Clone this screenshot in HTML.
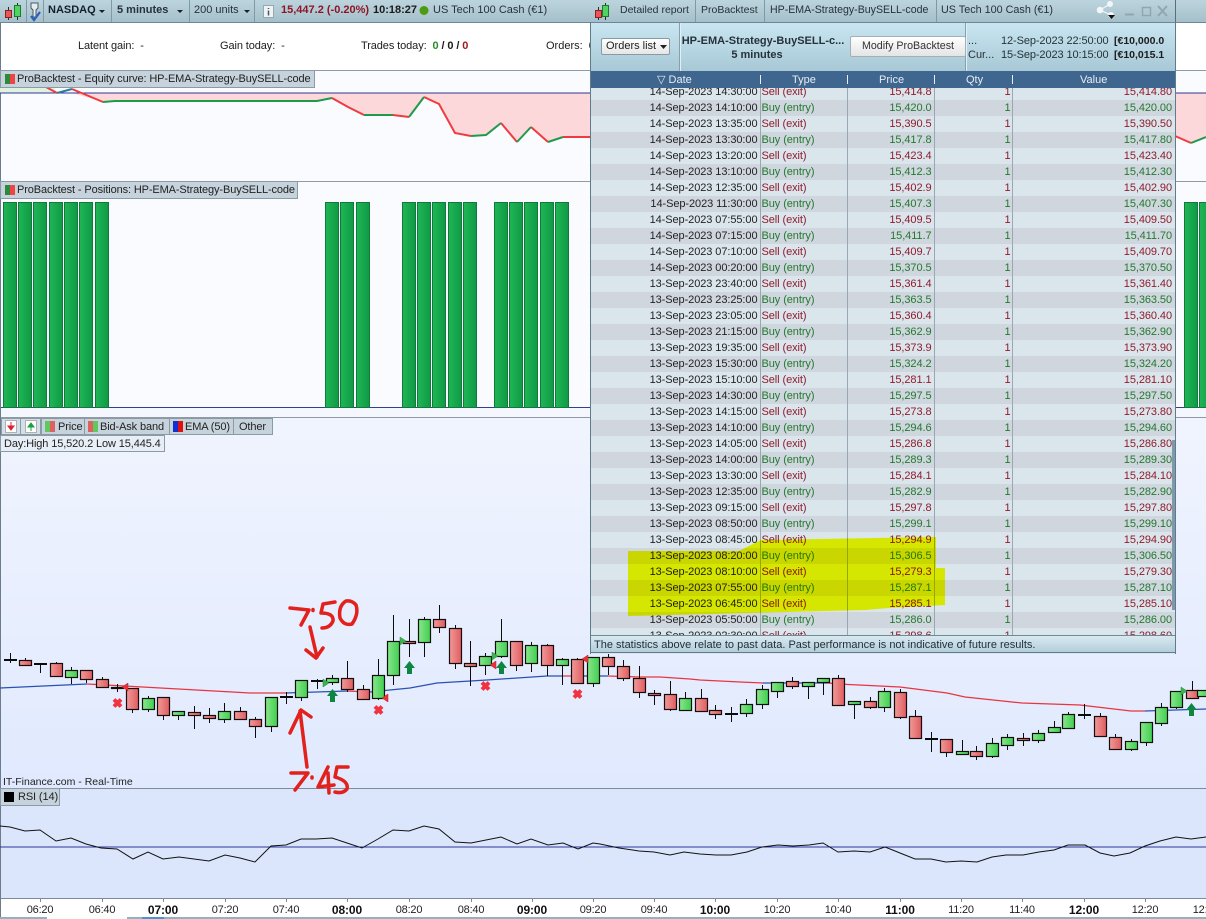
<!DOCTYPE html>
<html><head><meta charset="utf-8"><title>ProBacktest</title>
<style>
html,body{margin:0;padding:0;background:#fff}
#p{position:relative;width:1206px;height:919px;overflow:hidden;font:11px/14px "Liberation Sans",Arial,sans-serif;color:#1c1c1c;background:#fff}
.a{position:absolute;white-space:nowrap}
.lb{position:absolute;background:#c6d3dc;border:1px solid #8b9aa5;box-sizing:border-box;white-space:nowrap;color:#222;line-height:17px;letter-spacing:-.12px}
.sw{position:absolute;width:10px;height:10px;top:3px;left:4px}
.sep{position:absolute;top:0;width:1px;height:22px;background:#7f9aa6}
svg{position:absolute;left:0;top:0}
.g{fill:url(#gg);stroke:#0c120c;stroke-width:1.2}
.r{fill:url(#rg);stroke:#180c0c;stroke-width:1.2}
#tb{position:absolute;left:0;top:88px;width:585px;height:547px;overflow:hidden}
table{border-collapse:collapse;table-layout:fixed;width:585px;margin-top:-4px}
td{height:16px;padding:0;line-height:16px;font-size:11px;border-left:1px solid #98a7b2;box-sizing:border-box;white-space:nowrap;overflow:hidden;letter-spacing:-.08px}
td:first-child{border-left:0;text-align:right;padding-right:2px;color:#222}
td:nth-child(2){padding-left:1px}
td:nth-child(3){text-align:right;padding-right:2px}
td:nth-child(4){text-align:right;padding-right:1px}
td:nth-child(5){text-align:right;padding-right:3px}
.s{background:#dbe6ec;color:#8f1b2c}
.b{background:#cfd6dd;color:#23792f}
.ax{position:absolute;top:903px;font-size:11px;line-height:14px;width:50px;text-align:center;color:#222;letter-spacing:-.2px}
.ax.bd{font-weight:bold;font-size:12px;color:#111;letter-spacing:-.1px}
</style></head><body><div id="p">

<!-- top bar -->
<div class="a" style="left:0;top:0;width:1206px;height:22px;background:linear-gradient(#bcd4dd,#a6c0cb);border-bottom:1px solid #6d8794;box-sizing:content-box"></div>
<div class="sep" style="left:26px"></div><div class="sep" style="left:43px"></div><div class="sep" style="left:111px"></div><div class="sep" style="left:189px"></div><div class="sep" style="left:254px"></div>
<span class="a" style="left:48px;top:3px;font-weight:bold;color:#13202a">NASDAQ</span>
<span class="a" style="left:117px;top:3px;font-weight:bold;color:#26323a">5 minutes</span>
<span class="a" style="left:194px;top:3px;color:#26323a">200 units</span>
<span class="a" style="left:281px;top:3px;font-weight:bold;color:#8e1526">15,447.2 (-0.20%)</span>
<span class="a" style="left:373px;top:3px;font-weight:bold;color:#1b1b1b">10:18:27</span>
<span class="a" style="left:433px;top:3px;color:#26323a">US Tech 100 Cash (€1)</span>

<!-- info row -->
<span class="a" style="left:78px;top:39px;letter-spacing:-.1px">Latent gain: &nbsp;-</span>
<span class="a" style="left:220px;top:39px;letter-spacing:-.1px">Gain today: &nbsp;-</span>
<span class="a" style="left:361px;top:39px;letter-spacing:-.1px">Trades today: &nbsp;<b style="color:#2b8a2b">0</b> <b>/ 0 /</b> <b style="color:#a01a1a">0</b></span>
<span class="a" style="left:546px;top:39px">Orders: &nbsp;0</span>

<!-- chart main backgrounds -->
<div class="a" style="left:0;top:70px;width:1206px;height:1px;background:#8f9aa4"></div>
<div class="a" style="left:0;top:71px;width:1206px;height:110px;background:#fafbff"></div>
<div class="a" style="left:0;top:181px;width:1206px;height:1px;background:#8f9aa4"></div>
<div class="a" style="left:0;top:182px;width:1206px;height:225px;background:#f9fbff"></div>
<div class="a" style="left:0;top:407px;width:1206px;height:1px;background:#34408a"></div>
<div class="a" style="left:0;top:408px;width:1206px;height:9px;background:#f4f7fe"></div>
<div class="a" style="left:0;top:417px;width:1206px;height:1px;background:#8f9aa4"></div>
<div class="a" style="left:0;top:418px;width:1206px;height:370px;background:linear-gradient(#f0f4fe,#e0e9fe)"></div>
<div class="a" style="left:0;top:788px;width:1206px;height:1px;background:#7e8c9a"></div>
<div class="a" style="left:0;top:789px;width:1206px;height:109px;background:#dbe6fd"></div>
<div class="a" style="left:0;top:898px;width:1206px;height:1px;background:#7e8c9a"></div>
<div class="a" style="left:0;top:899px;width:1206px;height:18px;background:#fff"></div>
<div class="a" style="left:0;top:917px;width:1206px;height:2px;background:#93b2bf"></div>
<div class="a" style="left:47px;top:917px;width:80px;height:2px;background:#fff"></div>
<div class="a" style="left:142px;top:917px;width:22px;height:2px;background:#4a93d0"></div>
<div class="a" style="left:0;top:22px;width:1px;height:895px;background:#6c7c8a"></div>

<svg width="1206" height="919" viewBox="0 0 1206 919">
<defs>
<linearGradient id="gg" x1="0" x2="1" y1="0" y2="0"><stop offset="0" stop-color="#8ae58a"/><stop offset="1" stop-color="#3fd051"/></linearGradient>
<linearGradient id="rg" x1="0" x2="1" y1="0" y2="0"><stop offset="0" stop-color="#f09a9a"/><stop offset="1" stop-color="#e05c5f"/></linearGradient>
<linearGradient id="bar" x1="0" x2="1" y1="0" y2="0"><stop offset="0" stop-color="#1fb656"/><stop offset="1" stop-color="#0f9a45"/></linearGradient>
</defs>

<!-- equity -->
<path d="M72 93L103 102L115 101L317 101L332 98L348 107L364 115L393 115L409 117L424 97L439 104L455 133L471 136L486 135L501 123L517 142L531 127L548 142L563 137L590 137L590 93Z" fill="#fdd8da"/>
<path d="M1175 93L1175 136L1191 143L1206 137L1206 93Z" fill="#fdd8da"/>
<path d="M0 71H46L57 93H0Z" fill="#dff2df"/>
<path d="M0 93H1206" stroke="#2e3596" stroke-width="1" fill="none"/>
<g fill="none" stroke-width="2">
<path d="M46 87L57 93M72 89L103 102M332 98L348 107L364 115M393 115L409 117M424 97L439 104L455 133L471 136M501 123L517 142M531 127L548 142M563 137L590 137M1175 136L1191 143" stroke="#ef3b3f"/>
<path d="M57 93L72 89" stroke="#2a7f96"/>
<path d="M103 102L115 101L317 101L332 98M364 115L393 115M409 117L424 97M471 136L486 135L501 123M517 142L531 127M548 142L563 137M1191 143L1206 137" stroke="#1f9a4d"/>
</g>

<!-- position bars -->
<g fill="url(#bar)" stroke="#117a3a" stroke-width="1">
<rect x="3.5" y="202.5" width="13" height="205"/><rect x="18.5" y="202.5" width="13" height="205"/><rect x="33.5" y="202.5" width="13" height="205"/><rect x="49.5" y="202.5" width="13" height="205"/><rect x="64.5" y="202.5" width="13" height="205"/><rect x="79.5" y="202.5" width="13" height="205"/><rect x="95.5" y="202.5" width="13" height="205"/>
<rect x="325.5" y="202.5" width="13" height="205"/><rect x="340.5" y="202.5" width="13" height="205"/><rect x="356.5" y="202.5" width="13" height="205"/>
<rect x="402.5" y="202.5" width="13" height="205"/><rect x="417.5" y="202.5" width="13" height="205"/><rect x="432.5" y="202.5" width="13" height="205"/><rect x="448.5" y="202.5" width="13" height="205"/><rect x="463.5" y="202.5" width="13" height="205"/>
<rect x="494.5" y="202.5" width="13" height="205"/><rect x="509.5" y="202.5" width="13" height="205"/><rect x="524.5" y="202.5" width="13" height="205"/><rect x="540.5" y="202.5" width="13" height="205"/><rect x="555.5" y="202.5" width="13" height="205"/>
<rect x="1184.5" y="202.5" width="13" height="205"/><rect x="1199.5" y="202.5" width="13" height="205"/>
</g>

<!-- EMA -->
<g fill="none" stroke-width="1.3">
<path d="M0 688L87 684M286 693L347 691M370 692L410 688L437 683L487 680L547 676L562 676M578 676L608 676M763 683L828 683M1145 711L1206 709" stroke="#2a50b4"/>
<path d="M87 684L125 686L250 693L286 693M347 691L370 692M562 676L578 676M608 676L640 677L660 677L690 679L700 680L740 682L763 683M828 683L838 684L900 687L947 693L965 697L1012 702L1022 703L1080 705L1131 711L1145 711" stroke="#e8353f"/>
</g>

<!-- wicks -->
<path stroke="#0c0c0c" stroke-width="1" fill="none" d="M10.5 653V663M25.5 658V666M40.5 664V673M56.5 662V677M71.5 667V684M86.5 670V683M102.5 677V687M117.5 684V692M132.5 688V713M148.5 696V712M163.5 697V720M178.5 711V720M194.5 706V729M209.5 708V723M224.5 703V723M240.5 707V719M255.5 717V738M271.5 697V732M286.5 692V704M301.5 680V701M317.5 679V689M332.5 675V685M347.5 661V692M363.5 685V699M378.5 659V700M393.5 615V685M409.5 619V657M424.5 617V657M439.5 605V633M455.5 625V669M470.5 641V686M485.5 653V675M501.5 619V658M516.5 641V671M531.5 642V672M547.5 644V676M562.5 658V685M577.5 658V683M593.5 657V687M608.5 654V675M623.5 660V681M639.5 666V698M654.5 690V705M670.5 681V711M685.5 692V711M701.5 689V712M715.5 705V719M731.5 707V722M746.5 699V717M762.5 685V709M777.5 682V698M792.5 677V689M808.5 682V699M823.5 678V695M838.5 675V705M854.5 701V719M870.5 697V709M884.5 688V712M900.5 689V719M915.5 710V739M931.5 732V752M946.5 739V757M962.5 740V755M976.5 746V760M992.5 738V758M1007.5 734V750M1023.5 733V746M1038.5 730V743M1054.5 721V733M1068.5 712V729M1084.5 704V719M1100.5 713V736M1115.5 734V750M1131.5 739V751M1146.5 722V746M1161.5 703V726M1176.5 691V709M1192.5 681V699"/>
<!-- dojis -->
<path stroke="#0c0c0c" stroke-width="2" fill="none" d="M4 660H17M34 664H47M280 697H293M311 681H324M725 714H738M925 739H938M1078 715H1091"/>

<!-- red bodies -->
<rect class="r" x="19.5" y="660.5" width="12" height="5"/><rect class="r" x="50.5" y="663.5" width="12" height="13"/><rect class="r" x="80.5" y="670.5" width="12" height="9"/><rect class="r" x="96.5" y="679.5" width="12" height="8"/><rect class="r" x="111.5" y="687.5" width="12" height="1"/><rect class="r" x="126.5" y="688.5" width="12" height="21"/><rect class="r" x="157.5" y="697.5" width="12" height="18"/><rect class="r" x="188.5" y="712.5" width="12" height="3"/><rect class="r" x="203.5" y="715.5" width="12" height="3"/><rect class="r" x="234.5" y="711.5" width="12" height="8"/><rect class="r" x="249.5" y="719.5" width="12" height="7"/><rect class="r" x="341.5" y="678.5" width="12" height="11"/><rect class="r" x="357.5" y="689.5" width="12" height="10"/><rect class="r" x="403.5" y="641.5" width="12" height="2"/><rect class="r" x="433.5" y="619.5" width="12" height="8"/><rect class="r" x="449.5" y="628.5" width="12" height="35"/><rect class="r" x="464.5" y="663.5" width="12" height="3"/><rect class="r" x="510.5" y="641.5" width="12" height="24"/><rect class="r" x="541.5" y="645.5" width="12" height="20"/><rect class="r" x="571.5" y="659.5" width="12" height="24"/><rect class="r" x="602.5" y="657.5" width="12" height="9"/><rect class="r" x="617.5" y="666.5" width="12" height="12"/><rect class="r" x="633.5" y="678.5" width="12" height="14"/><rect class="r" x="648.5" y="693.5" width="12" height="2"/><rect class="r" x="664.5" y="694.5" width="12" height="15"/><rect class="r" x="695.5" y="698.5" width="12" height="13"/><rect class="r" x="709.5" y="710.5" width="12" height="4"/><rect class="r" x="786.5" y="681.5" width="12" height="5"/><rect class="r" x="832.5" y="678.5" width="12" height="27"/><rect class="r" x="864.5" y="701.5" width="12" height="6"/><rect class="r" x="894.5" y="692.5" width="12" height="25"/><rect class="r" x="909.5" y="716.5" width="12" height="22"/><rect class="r" x="940.5" y="739.5" width="12" height="13"/><rect class="r" x="970.5" y="751.5" width="12" height="5"/><rect class="r" x="1017.5" y="738.5" width="12" height="2"/><rect class="r" x="1094.5" y="716.5" width="12" height="20"/><rect class="r" x="1109.5" y="737.5" width="12" height="12"/><rect class="r" x="1186.5" y="690.5" width="12" height="8"/>
<!-- green bodies -->
<rect class="g" x="65.5" y="670.5" width="12" height="7"/><rect class="g" x="142.5" y="698.5" width="12" height="11"/><rect class="g" x="172.5" y="711.5" width="12" height="4"/><rect class="g" x="218.5" y="711.5" width="12" height="8"/><rect class="g" x="265.5" y="697.5" width="12" height="29"/><rect class="g" x="295.5" y="680.5" width="12" height="17"/><rect class="g" x="326.5" y="678.5" width="12" height="4"/><rect class="g" x="372.5" y="675.5" width="12" height="23"/><rect class="g" x="387.5" y="641.5" width="12" height="34"/><rect class="g" x="418.5" y="619.5" width="12" height="23"/><rect class="g" x="479.5" y="656.5" width="12" height="9"/><rect class="g" x="495.5" y="641.5" width="12" height="15"/><rect class="g" x="525.5" y="645.5" width="12" height="18"/><rect class="g" x="556.5" y="659.5" width="12" height="6"/><rect class="g" x="587.5" y="657.5" width="12" height="26"/><rect class="g" x="679.5" y="698.5" width="12" height="12"/><rect class="g" x="740.5" y="704.5" width="12" height="9"/><rect class="g" x="756.5" y="689.5" width="12" height="15"/><rect class="g" x="771.5" y="682.5" width="12" height="9"/><rect class="g" x="802.5" y="682.5" width="12" height="4"/><rect class="g" x="817.5" y="678.5" width="12" height="4"/><rect class="g" x="848.5" y="701.5" width="12" height="3"/><rect class="g" x="878.5" y="691.5" width="12" height="16"/><rect class="g" x="956.5" y="751.5" width="12" height="3"/><rect class="g" x="986.5" y="743.5" width="12" height="13"/><rect class="g" x="1001.5" y="737.5" width="12" height="8"/><rect class="g" x="1032.5" y="733.5" width="12" height="7"/><rect class="g" x="1048.5" y="727.5" width="12" height="5"/><rect class="g" x="1062.5" y="714.5" width="12" height="14"/><rect class="g" x="1125.5" y="741.5" width="12" height="8"/><rect class="g" x="1140.5" y="722.5" width="12" height="20"/><rect class="g" x="1155.5" y="707.5" width="12" height="16"/><rect class="g" x="1170.5" y="691.5" width="12" height="16"/><rect class="g" x="1197.5" y="690.5" width="12" height="6"/>

<!-- markers: X -->
<g stroke="#f0333f" stroke-width="4" fill="none">
<path d="M114 699.5L121 706.5M121 699.5L114 706.5"/>
<path d="M375 706.5L382 713.5M382 706.5L375 713.5"/>
<path d="M482 682.5L489 689.5M489 682.5L482 689.5"/>
<path d="M574 690.5L581 697.5M581 690.5L574 697.5"/>
</g>
<!-- up arrows -->
<g fill="#0c8642">
<path d="M332.5 689L338 696H335V702H330V696H327Z"/>
<path d="M409.5 661L415 668H412V674H407V668H404Z"/>
<path d="M501.5 661L507 668H504V674H499V668H496Z"/>
<path d="M1191.5 703L1197 710H1194V716H1189V710H1186Z"/>
</g>
<!-- triangles -->
<g fill="#e9333b" stroke="#b81e26" stroke-width=".5">
<path d="M128 683V691L122 687Z"/><path d="M388 694V702L382 698Z"/><path d="M496 661V669L490 665Z"/><path d="M588 655V663L582 659Z"/>
</g>
<g fill="#3bb54a" stroke="#1e8a40" stroke-width=".5">
<path d="M323 679V687L329 683Z"/><path d="M400 637V645L406 641Z"/><path d="M492 652V660L498 656Z"/><path d="M1181 687V695L1187 691Z"/>
</g>

<!-- RSI -->
<path d="M0 847H1206" stroke="#2e3596" stroke-width="1" fill="none"/>
<path fill="none" stroke="#111" stroke-width="1" d="M0 826L10 827L25 831L40 830L56 841L71 838L86 844L101 848L117 849L133 859L148 852L163 859L179 857L194 859L209 861L225 855L240 858L255 862L271 846L286 845L301 839L316 839L332 838L347 843L362 848L378 839L393 830L409 831L424 826L439 829L455 842L471 843L486 840L501 837L517 844L531 839L548 845L563 843L578 849L593 843L600 844L619 848L639 851L654 852L670 855L684 852L700 854L716 855L731 855L747 852L762 847L778 845L793 846L809 845L823 843L838 852L854 851L870 852L885 847L900 853L915 859L931 859L946 862L961 861L977 862L992 857L1006 855L1023 855L1039 852L1054 850L1068 845L1085 845L1100 853L1114 856L1130 853L1145 846L1160 841L1176 837L1191 839L1206 837"/>
<!-- axis ticks -->
<path stroke="#7e8c9a" stroke-width="1" d="M40.5 899v3M102.5 899v3M163.5 899v3M225.5 899v3M286.5 899v3M347.5 899v3M409.5 899v3M471.5 899v3M532.5 899v3M593.5 899v3M654.5 899v3M715.5 899v3M777.5 899v3M838.5 899v3M900.5 899v3M961.5 899v3M1022.5 899v3M1084.5 899v3M1145.5 899v3"/>

<!-- top icons left -->
<path d="M8.5 7V20M17.5 3V20" stroke="#2a2a2a"/>
<rect x="5.5" y="10.5" width="6" height="7" fill="#e8555a" stroke="#8a2020"/>
<rect x="14.5" y="5.5" width="6" height="11" fill="#4fd45f" stroke="#1d7a2c"/>
<path d="M31 3h7v5l-2 2v7h-3v-7l-2-2z" fill="#e6edf0" stroke="#4b5a62"/>
<path d="M31 16l3 4 6-8" stroke="#2a5fc0" stroke-width="2.2" fill="none"/>
<path d="M99 10h6l-3 3zM177 10h6l-3 3zM244 10h6l-3 3z" fill="#16222a"/>
<rect x="263.5" y="5.5" width="10" height="12" fill="#eef3f5" stroke="#98a8b0"/>
<path d="M268.5 8v1M268.5 10.500v5" stroke="#4a5a64" stroke-width="1.500"/>
<circle cx="424" cy="10.500" r="4.500" fill="#4e9a10"/>
</svg>

<!-- labels -->
<div class="lb" style="left:0;top:70px;width:315px;height:18px;padding-left:16px"><span class="sw" style="background:linear-gradient(90deg,#2d8a3c 50%,#e44 50%)"></span>ProBacktest - Equity curve: HP-EMA-Strategy-BuySELL-code</div>
<div class="lb" style="left:0;top:181px;width:298px;height:18px;padding-left:16px"><span class="sw" style="background:linear-gradient(90deg,#2d8a3c 50%,#e44 50%)"></span>ProBacktest - Positions: HP-EMA-Strategy-BuySELL-code</div>

<div class="lb" style="left:1px;top:418px;width:20px;height:17px;background:#d4e0e8"></div>
<div class="lb" style="left:20px;top:418px;width:21px;height:17px;background:#d4e0e8"></div>
<svg width="60" height="440" viewBox="0 0 60 440" style="pointer-events:none">
<rect x="5.500" y="420.500" width="11" height="12" fill="#fff" stroke="#b0b0b0"/><path d="M11 422v4h3l-3 4-3-4h3z" fill="#dd2230" stroke="#dd2230"/>
<rect x="25.500" y="420.500" width="11" height="12" fill="#fff" stroke="#b0b0b0"/><path d="M31 431v-4h3l-3-4-3 4h3z" fill="#18a040" stroke="#18a040"/>
</svg>
<div class="lb" style="left:41px;top:418px;width:44px;height:17px;padding-left:16px;line-height:16px"><span class="sw" style="left:3px;top:2px;height:11px;background:linear-gradient(90deg,#5fc85f 50%,#e06060 50%)"></span>Price</div>
<div class="lb" style="left:85px;top:418px;width:85px;height:17px;padding-left:15px;border-left:0;line-height:16px"><span class="sw" style="left:3px;top:2px;height:11px;background:linear-gradient(90deg,#e06060 50%,#5fc85f 50%)"></span>Bid-Ask band</div>
<div class="lb" style="left:170px;top:418px;width:64px;height:17px;padding-left:15px;border-left:0;line-height:16px"><span class="sw" style="left:3px;top:2px;height:11px;background:linear-gradient(90deg,#1030d0 50%,#e01010 50%)"></span>EMA (50)</div>
<div class="lb" style="left:234px;top:418px;width:39px;height:17px;padding-left:5px;border-left:0;line-height:16px">Other</div>
<div class="lb" style="left:0;top:435px;width:165px;height:17px;padding-left:3px;background:#e8eef6;line-height:16px">Day:High 15,520.2 Low 15,445.4</div>

<span class="a" style="left:3px;top:775px;font-size:10.500px;color:#222">IT-Finance.com - Real-Time</span>
<div class="lb" style="left:0;top:788px;width:60px;height:18px;padding-left:17px"><span class="sw" style="left:3px;top:3px;background:#000"></span>RSI (14)</div>

<!-- axis labels -->
<span class="ax" style="left:15px">06:20</span><span class="ax" style="left:77px">06:40</span><span class="ax bd" style="left:138px">07:00</span><span class="ax" style="left:200px">07:20</span><span class="ax" style="left:261px">07:40</span><span class="ax bd" style="left:322px">08:00</span><span class="ax" style="left:384px">08:20</span><span class="ax" style="left:446px">08:40</span><span class="ax bd" style="left:507px">09:00</span><span class="ax" style="left:568px">09:20</span><span class="ax" style="left:629px">09:40</span><span class="ax bd" style="left:690px">10:00</span><span class="ax" style="left:752px">10:20</span><span class="ax" style="left:813px">10:40</span><span class="ax bd" style="left:875px">11:00</span><span class="ax" style="left:936px">11:20</span><span class="ax" style="left:997px">11:40</span><span class="ax bd" style="left:1059px">12:00</span><span class="ax" style="left:1120px">12:20</span><span class="ax" style="left:1181px">12:40</span>

<!-- window -->
<div class="a" style="left:590px;top:0;width:586px;height:654px;background:#dbe6ec">
 <div class="a" style="left:0;top:0;width:585px;height:22px;background:linear-gradient(#bcd4dd,#a6c0cb);border-bottom:1px solid #6d8794"></div>
 <div class="sep" style="left:105px"></div><div class="sep" style="left:174px"></div><div class="sep" style="left:346px"></div><div class="sep" style="left:585px;background:#556f7c;height:23px"></div>
 <span class="a" style="left:30px;top:3px;color:#26323a;font-size:10.500px">Detailed report</span>
 <span class="a" style="left:111px;top:3px;color:#26323a;font-size:10.500px">ProBacktest</span>
 <span class="a" style="left:180px;top:3px;color:#26323a;font-size:10.600px">HP-EMA-Strategy-BuySELL-code</span>
 <span class="a" style="left:351px;top:3px;color:#26323a;font-size:10.800px">US Tech 100 Cash (€1)</span>

 <div class="a" style="left:0;top:23px;width:585px;height:48px;background:linear-gradient(#c9e6f2,#a8c8d5)"></div>
 <div class="a" style="left:90px;top:23px;width:1px;height:48px;background:#e2eff4;box-shadow:-1px 0 0 #86a0ac"></div>
 <div class="a" style="left:376px;top:23px;width:1px;height:48px;background:#e2eff4;box-shadow:-1px 0 0 #86a0ac"></div>
 <div class="a" style="left:11px;top:38px;width:69px;height:17px;box-sizing:border-box;background:linear-gradient(#fff,#e6e6e6);border:1px solid #8a9aa2;border-radius:2px;line-height:15px;padding-left:4px;color:#222">Orders list<svg width="8" height="5" style="position:absolute;left:58px;top:6px"><path d="M0 0h7l-3.500 4z" fill="#222"/></svg></div>
 <div class="a" style="left:91px;top:34px;width:164px;text-align:center;font-weight:bold;font-size:11px;line-height:14px;color:#26323a">HP-EMA-Strategy-BuySELL-c...</div>
 <div class="a" style="left:91px;top:48px;width:152px;text-align:center;font-weight:bold;font-size:11px;line-height:14px;color:#26323a">5 minutes</div>
 <div class="a" style="left:260px;top:36px;width:116px;height:21px;box-sizing:border-box;background:linear-gradient(#fff,#e4e4e4);border:1px solid #a4b0b6;border-radius:2px;line-height:19px;text-align:center;color:#333;font-size:10.700px">Modify ProBacktest</div>
 <span class="a" style="left:378px;top:34px;color:#26323a">...</span>
 <span class="a" style="left:378px;top:48px;color:#26323a">Cur...</span>
 <span class="a" style="left:411px;top:34px;color:#26323a;letter-spacing:-.1px">12-Sep-2023 22:50:00</span>
 <span class="a" style="left:411px;top:48px;color:#26323a;letter-spacing:-.1px">15-Sep-2023 10:15:00</span>
 <span class="a" style="left:524px;top:34px;font-weight:bold;color:#1c1c1c;font-size:10.500px">[€10,000.0</span>
 <span class="a" style="left:524px;top:48px;font-weight:bold;color:#1c1c1c;font-size:10.500px">[€10,015.1</span>

 <div class="a" style="left:0;top:71px;width:585px;height:17px;background:#3f668f;color:#e6edf3;line-height:17px">
  <span class="a" style="left:67px;top:1px">▽ Date</span><span class="a" style="left:170px;top:4px;width:1px;height:9px;background:#e6edf3"></span>
  <span class="a" style="left:202px;top:1px">Type</span><span class="a" style="left:257px;top:4px;width:1px;height:9px;background:#e6edf3"></span>
  <span class="a" style="left:289px;top:1px">Price</span><span class="a" style="left:344px;top:4px;width:1px;height:9px;background:#e6edf3"></span>
  <span class="a" style="left:376px;top:1px">Qty</span><span class="a" style="left:422px;top:4px;width:1px;height:9px;background:#e6edf3"></span>
  <span class="a" style="left:490px;top:1px">Value</span>
 </div>

 <div id="tb"><table>
 <colgroup><col style="width:170px"><col style="width:87px"><col style="width:87px"><col style="width:78px"><col style="width:163px"></colgroup>
 <tr class="s"><td>14-Sep-2023 14:30:00</td><td>Sell (exit)</td><td>15,414.8</td><td>1</td><td>15,414.80</td></tr>
 <tr class="b"><td>14-Sep-2023 14:10:00</td><td>Buy (entry)</td><td>15,420.0</td><td>1</td><td>15,420.00</td></tr>
 <tr class="s"><td>14-Sep-2023 13:35:00</td><td>Sell (exit)</td><td>15,390.5</td><td>1</td><td>15,390.50</td></tr>
 <tr class="b"><td>14-Sep-2023 13:30:00</td><td>Buy (entry)</td><td>15,417.8</td><td>1</td><td>15,417.80</td></tr>
 <tr class="s"><td>14-Sep-2023 13:20:00</td><td>Sell (exit)</td><td>15,423.4</td><td>1</td><td>15,423.40</td></tr>
 <tr class="b"><td>14-Sep-2023 13:10:00</td><td>Buy (entry)</td><td>15,412.3</td><td>1</td><td>15,412.30</td></tr>
 <tr class="s"><td>14-Sep-2023 12:35:00</td><td>Sell (exit)</td><td>15,402.9</td><td>1</td><td>15,402.90</td></tr>
 <tr class="b"><td>14-Sep-2023 11:30:00</td><td>Buy (entry)</td><td>15,407.3</td><td>1</td><td>15,407.30</td></tr>
 <tr class="s"><td>14-Sep-2023 07:55:00</td><td>Sell (exit)</td><td>15,409.5</td><td>1</td><td>15,409.50</td></tr>
 <tr class="b"><td>14-Sep-2023 07:15:00</td><td>Buy (entry)</td><td>15,411.7</td><td>1</td><td>15,411.70</td></tr>
 <tr class="s"><td>14-Sep-2023 07:10:00</td><td>Sell (exit)</td><td>15,409.7</td><td>1</td><td>15,409.70</td></tr>
 <tr class="b"><td>14-Sep-2023 00:20:00</td><td>Buy (entry)</td><td>15,370.5</td><td>1</td><td>15,370.50</td></tr>
 <tr class="s"><td>13-Sep-2023 23:40:00</td><td>Sell (exit)</td><td>15,361.4</td><td>1</td><td>15,361.40</td></tr>
 <tr class="b"><td>13-Sep-2023 23:25:00</td><td>Buy (entry)</td><td>15,363.5</td><td>1</td><td>15,363.50</td></tr>
 <tr class="s"><td>13-Sep-2023 23:05:00</td><td>Sell (exit)</td><td>15,360.4</td><td>1</td><td>15,360.40</td></tr>
 <tr class="b"><td>13-Sep-2023 21:15:00</td><td>Buy (entry)</td><td>15,362.9</td><td>1</td><td>15,362.90</td></tr>
 <tr class="s"><td>13-Sep-2023 19:35:00</td><td>Sell (exit)</td><td>15,373.9</td><td>1</td><td>15,373.90</td></tr>
 <tr class="b"><td>13-Sep-2023 15:30:00</td><td>Buy (entry)</td><td>15,324.2</td><td>1</td><td>15,324.20</td></tr>
 <tr class="s"><td>13-Sep-2023 15:10:00</td><td>Sell (exit)</td><td>15,281.1</td><td>1</td><td>15,281.10</td></tr>
 <tr class="b"><td>13-Sep-2023 14:30:00</td><td>Buy (entry)</td><td>15,297.5</td><td>1</td><td>15,297.50</td></tr>
 <tr class="s"><td>13-Sep-2023 14:15:00</td><td>Sell (exit)</td><td>15,273.8</td><td>1</td><td>15,273.80</td></tr>
 <tr class="b"><td>13-Sep-2023 14:10:00</td><td>Buy (entry)</td><td>15,294.6</td><td>1</td><td>15,294.60</td></tr>
 <tr class="s"><td>13-Sep-2023 14:05:00</td><td>Sell (exit)</td><td>15,286.8</td><td>1</td><td>15,286.80</td></tr>
 <tr class="b"><td>13-Sep-2023 14:00:00</td><td>Buy (entry)</td><td>15,289.3</td><td>1</td><td>15,289.30</td></tr>
 <tr class="s"><td>13-Sep-2023 13:30:00</td><td>Sell (exit)</td><td>15,284.1</td><td>1</td><td>15,284.10</td></tr>
 <tr class="b"><td>13-Sep-2023 12:35:00</td><td>Buy (entry)</td><td>15,282.9</td><td>1</td><td>15,282.90</td></tr>
 <tr class="s"><td>13-Sep-2023 09:15:00</td><td>Sell (exit)</td><td>15,297.8</td><td>1</td><td>15,297.80</td></tr>
 <tr class="b"><td>13-Sep-2023 08:50:00</td><td>Buy (entry)</td><td>15,299.1</td><td>1</td><td>15,299.10</td></tr>
 <tr class="s"><td>13-Sep-2023 08:45:00</td><td>Sell (exit)</td><td>15,294.9</td><td>1</td><td>15,294.90</td></tr>
 <tr class="b"><td>13-Sep-2023 08:20:00</td><td>Buy (entry)</td><td>15,306.5</td><td>1</td><td>15,306.50</td></tr>
 <tr class="s"><td>13-Sep-2023 08:10:00</td><td>Sell (exit)</td><td>15,279.3</td><td>1</td><td>15,279.30</td></tr>
 <tr class="b"><td>13-Sep-2023 07:55:00</td><td>Buy (entry)</td><td>15,287.1</td><td>1</td><td>15,287.10</td></tr>
 <tr class="s"><td>13-Sep-2023 06:45:00</td><td>Sell (exit)</td><td>15,285.1</td><td>1</td><td>15,285.10</td></tr>
 <tr class="b"><td>13-Sep-2023 05:50:00</td><td>Buy (entry)</td><td>15,286.0</td><td>1</td><td>15,286.00</td></tr>
 <tr class="s"><td>13-Sep-2023 02:30:00</td><td>Sell (exit)</td><td>15,298.6</td><td>1</td><td>15,298.60</td></tr>
 </table></div>

 <div class="a" style="left:582px;top:440px;width:3px;height:170px;background:#7f98ab"></div>
 <div class="a" style="left:0;top:635px;width:585px;height:18px;box-sizing:border-box;background:linear-gradient(#d9e9f0,#b2cedb);border-top:1px solid #6f8a97;border-bottom:1px solid #5f7c8c;padding-left:4px;line-height:18px;color:#1f2d36;font-size:11px">The statistics above relate to past data. Past performance is not indicative of future results.</div>
 <div class="a" style="left:0;top:22px;width:1px;height:632px;background:#5f7c8c"></div>
 <div class="a" style="left:585px;top:22px;width:1px;height:632px;background:#5f7c8c"></div>
</div>

<!-- overlay icons, highlight, handwriting -->
<svg width="1206" height="919" viewBox="0 0 1206 919" style="pointer-events:none">
<path d="M598.500 7V20M605.500 3V20" stroke="#2a2a2a"/>
<rect x="595.500" y="10.500" width="6" height="7" fill="#e8555a" stroke="#8a2020"/>
<rect x="602.500" y="5.500" width="6" height="11" fill="#4fd45f" stroke="#1d7a2c"/>
<g fill="#f2f6f8" stroke="#f2f6f8">
<circle cx="1110" cy="4" r="2.500"/><circle cx="1100" cy="10" r="2.800"/><circle cx="1111" cy="15" r="2.500"/>
<path d="M1110 4L1100 10L1111 15" fill="none" stroke-width="1.200"/>
</g>
<path d="M1108 15h7l-3.500 4z" fill="#111"/>
<path d="M1125 14.500h9" stroke="#8fa7b2" stroke-width="2"/>
<rect x="1142.500" y="7.500" width="8" height="8" fill="none" stroke="#8fa7b2" stroke-width="1.500"/>
<path d="M1158 6l9 10M1167 6l-9 10" stroke="#8fa7b2" stroke-width="2"/>

<path d="M761 540L936 537L936 568L945 568L945 605L889 608L865 610L628 616L628 551L739 551Z" fill="#f8ff00" style="mix-blend-mode:multiply"/>

<g fill="none" stroke="#e2211c" stroke-width="3.500" stroke-linecap="round" stroke-linejoin="round">
<path d="M290 608L309 610L301 625"/>
<path d="M313 609.500v1"/>
<path d="M335 602L323 604L321 613Q334 613 333 621Q330 628 322 628"/>
<path d="M346 601Q338 606 340 618Q344 626 352 624Q359 614 356 605Q352 600 346 601Z"/>
<path d="M310 627L317 657M306 650L316 658L323 648"/>
<path d="M307 767L300 711M290 733L301 710L311 717"/>
<path d="M291 773L308 773L295 790"/>
<path d="M312 777v1"/>
<path d="M328 767L318 787L334 785M328 773L329 793"/>
<path d="M348 767L337 767L335 777Q349 781 347 789Q343 794 335 792"/>
</g>
</svg>
</div></body></html>
